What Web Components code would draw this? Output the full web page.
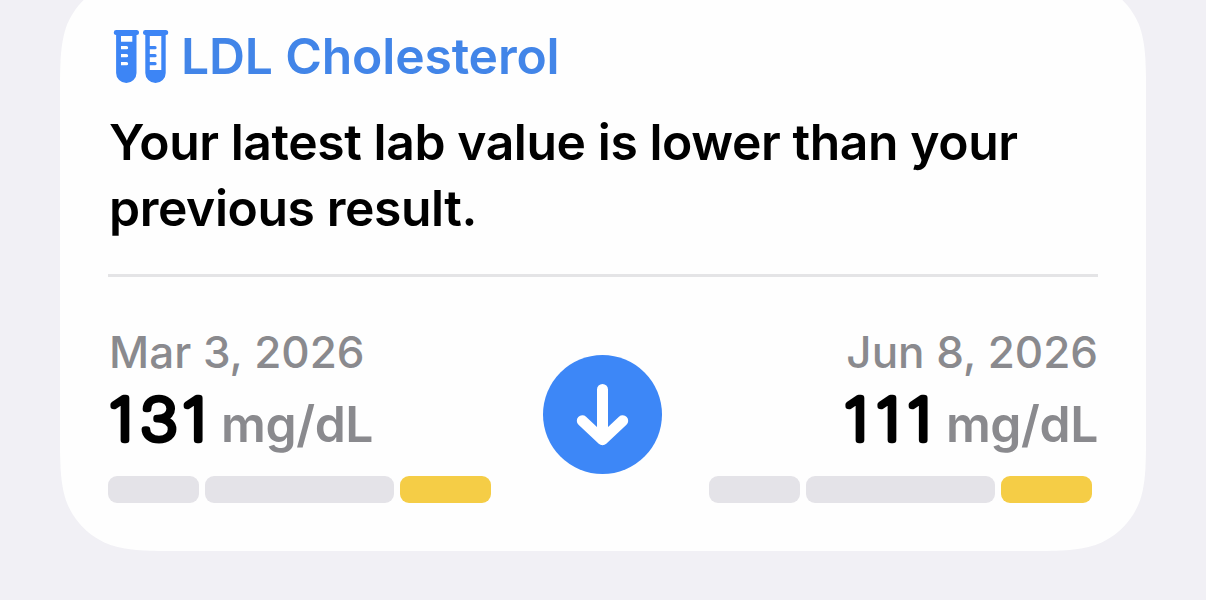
<!DOCTYPE html>
<html lang="en">
<head>
<meta charset="UTF-8">
<title>LDL Cholesterol</title>
<style>
  body {
    margin: 0;
    height: 600px;
    overflow: hidden;
    background: #f1f0f5;
    font-family: Inter, "Liberation Sans", sans-serif;
  }
</style>
</head>
<body>
<highlight-card>
  <card-title slot="title">LDL Cholesterol</card-title>
  <span slot="message">Your latest lab value is lower than your<br>previous result.</span>
  <lab-result date="Mar 3, 2026" value="131" unit="mg/dL" value-width="102" digits="1.3 28.7 66.8"></lab-result>
  <trend-arrow></trend-arrow>
  <lab-result date="Jun 8, 2026" value="111" unit="mg/dL" value-width="92" digits="1.3 30 57.8" align="end"></lab-result>
</highlight-card>

<script>
class HighlightCard extends HTMLElement {
  constructor() {
    super();
    this.attachShadow({ mode: 'open' });
    // the clip path is a rounded rect with continuous corners
    this.shadowRoot.innerHTML = `
      <style>
        :host {
          display: block;
          box-sizing: border-box;
          width: 1086px;
          height: 574px;
          margin: -23px 0 0 60px;
          padding: 46px 48px 0;
          background: #fefefe;
          clip-path: path("M122.3 0H963.7C998.9 0 1016.5 0 1035.5 6C1056.2 13.5 1072.5 29.8 1080 50.5C1086 69.5 1086 87.1 1086 122.3V451.7C1086 486.9 1086 504.5 1080 523.5C1072.5 544.2 1056.2 560.5 1035.5 568C1016.5 574 998.9 574 963.7 574H122.3C87.1 574 69.5 574 50.5 568C29.8 560.5 13.5 544.2 6 523.5C0 504.5 0 486.9 0 451.7V122.3C0 87.1 0 69.5 6 50.5C13.5 29.8 29.8 13.5 50.5 6C69.5 0 87.1 0 122.3 0Z");
        }

        [part="message"] {
          margin: 0;
          padding: 20px 0 0 1px;
          height: 188px;
          box-sizing: border-box;
          border-bottom: 3px solid #e4e4e6;
          color: #000;
          font-size: 49.8px;
          font-weight: 600;
          letter-spacing: -0.4px;
          line-height: 66px;
          white-space: nowrap;
        }

        [part="results"] {
          display: flex;
          justify-content: space-between;
          align-items: flex-start;
          padding-top: 49px;
        }
      </style>
      <slot name="title"></slot>
      <p part="message"><slot name="message"></slot></p>
      <div part="results"><slot></slot></div>
    `;
  }
}

class CardTitle extends HTMLElement {
  constructor() {
    super();
    this.attachShadow({ mode: 'open' });
    this.shadowRoot.innerHTML = `
      <style>
        :host {
          display: flex;
          align-items: center;
          height: 66px;
          padding-left: 5px;
          box-sizing: border-box;
          gap: 12px;
          color: #4285e8;
          font-size: 49.8px;
          font-weight: 600;
          letter-spacing: -0.15px;
          white-space: nowrap;
        }

        svg {
          display: block;
          flex: none;
        }
      </style>
      <svg width="56" height="56" viewBox="113 28 56 56" fill="#3d85f5">
        <path fill-rule="evenodd" d="M116.5 30H136.5a2.5 2.5 0 0 1 0 5V72.9a10.2 10.2 0 0 1-20.4 0V35a2.5 2.5 0 0 1 .4-5ZM121 36V41.7H132.3V36ZM121 46V49.3H126.5a1.6 1.6 0 0 0 0-3.3ZM121 54V57.3H126.5a1.6 1.6 0 0 0 0-3.3ZM121 62V65.3H126.5a1.6 1.6 0 0 0 0-3.3Z"/>
        <path fill-rule="evenodd" d="M145.7 30H165.7a2.5 2.5 0 0 1 0 5V72.9a10.2 10.2 0 0 1-20.4 0V35a2.5 2.5 0 0 1 .4-5ZM149.8 36V46H155a1.6 1.6 0 0 1 0 3.3H149.8V54H155a1.6 1.6 0 0 1 0 3.3H149.8V62H155a1.6 1.6 0 0 1 0 3.3H149.8V70H161.3V36Z"/>
      </svg>
      <span><slot></slot></span>
    `;
  }
}

class LabResult extends HTMLElement {
  constructor() {
    super();
    this.attachShadow({ mode: 'open' });
  }

  connectedCallback() {
    this.render();
  }

  render() {
    const width = this.getAttribute('value-width');

    // SVG text so the digits can get a round-joined outline
    this.shadowRoot.innerHTML = `
      <style>
        :host {
          display: block;
          width: 389px;
          color: #8a8a8e;
          white-space: nowrap;
        }

        :host([align="end"]) [part="date"] {
          text-align: right;
          padding: 0;
        }

        :host([align="end"]) [part="reading"] {
          justify-content: flex-end;
        }

        [part="date"] {
          height: 54px;
          padding-left: 1px;
          line-height: 53px;
          font-size: 44px;
          font-weight: 500;
        }

        [part="reading"] {
          display: flex;
          align-items: baseline;
          box-sizing: border-box;
          height: 96px;
          padding-top: 9px;
          line-height: 70px;
        }

        svg {
          display: block;
          overflow: visible;
          margin-right: 11px;
        }

        text {
          fill: #000;
          stroke: #000;
          stroke-width: 6.5px;
          stroke-linejoin: round;
          font-size: 57px;
          font-weight: 100;
        }

        [part="unit"] {
          font-size: 49.8px;
          font-weight: 600;
          letter-spacing: -0.4px;
        }

        [part="range"] {
          display: grid;
          grid-template-columns: 91px 189px 91px;
          gap: 6px;
        }

        i {
          height: 27px;
          border-radius: 9px;
          background: #e4e3e8;
        }

        i:last-child {
          background: #f5cd46;
        }
      </style>
      <div part="date">${this.getAttribute('date')}</div>
      <div part="reading">
        <svg width="${width}" height="48" viewBox="0 0 ${width} 48">
          <text x="${this.getAttribute('digits')}" y="45.6" transform="scale(1.12 1)">${this.getAttribute('value')}</text>
        </svg>
        <span part="unit">${this.getAttribute('unit')}</span>
      </div>
      <div part="range"><i></i><i></i><i></i></div>
    `;
  }
}

class TrendArrow extends HTMLElement {
  constructor() {
    super();
    this.attachShadow({ mode: 'open' });
    this.shadowRoot.innerHTML = `
      <style>
        :host {
          display: grid;
          place-items: center;
          width: 119px;
          height: 119px;
          margin: 29px 1px 0 0;
          border-radius: 50%;
          background: #3d87f7;
        }
      </style>
      <svg width="119" height="119" viewBox="0 0 119 119" fill="none" stroke="#fff" stroke-width="11" stroke-linecap="round" stroke-linejoin="round">
        <path d="M59.5 34.5V84M39.3 65.8L59.5 84.7L79.7 65.8"/>
      </svg>
    `;
  }
}

customElements.define('highlight-card', HighlightCard);
customElements.define('card-title', CardTitle);
customElements.define('lab-result', LabResult);
customElements.define('trend-arrow', TrendArrow);
</script>
</body>
</html>
